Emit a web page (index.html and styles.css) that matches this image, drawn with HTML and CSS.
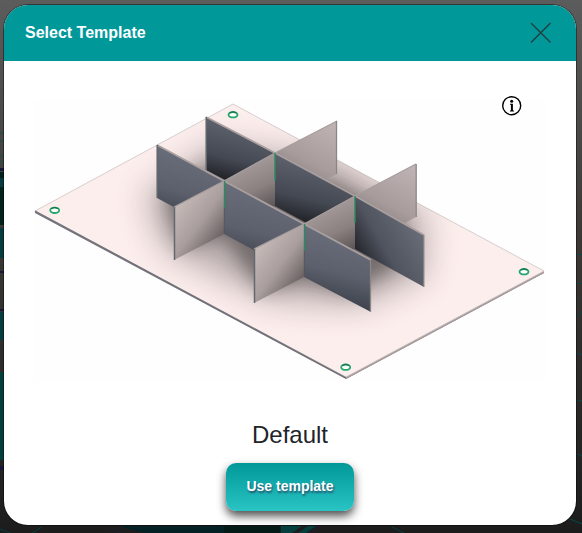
FILE: index.html
```html
<!DOCTYPE html>
<html lang="en">
<head>
    <meta charset="UTF-8">
    <meta name="viewport" content="width=device-width, initial-scale=1.0">
    <title>Select Template</title>
    <link rel="stylesheet" href="styles.css">
</head>
<body>
    <svg class="backdrop" viewBox="0 0 582 533" preserveAspectRatio="none" aria-hidden="true">
        <path d="M0 133H3M0 141H3M0 156H3M0 162H3" stroke="#0c5550"/>
        <path d="M0 172H4V225H0z" fill="#02221c"/>
        <path d="M0 168H4V171H0zM0 271H4V273H0zM0 309H4V311H0z" fill="#16163a"/>
        <path d="M0 178H4V187H0zM0 228H4V258H0zM0 312H4V340H0z" fill="#073b40"/>
        <path d="M0 372H4V460H0z" fill="#043f3c"/>
        <path d="M0 466H4V470H0z" fill="#16163a"/>
        <path d="M122 527L144 533H224V526H122z" fill="#042226"/>
        <path d="M224 526H280V533H224z" fill="#031a17"/>
        <path d="M281 526H302L292 533H281zM308 526H316L306 533H298z" fill="#053f3d"/>
        <path d="M108 527L120 533M320 526L310 533" stroke="#1c1c3c"/>
        <path d="M0 529L10 533M42 527L32 533M392 527L404 533" stroke="#063f40"/>
        <path d="M578 254L582 255M578 282L582 284M578 317L582 311M578 353L582 355M578 400L582 401M578 454L582 456M570 519L582 524" stroke="#064a4b"/>
    </svg>

    <div class="dialog" role="dialog" aria-labelledby="dialog-title">
        <header class="dialog-header">
            <h1 id="dialog-title">Select Template</h1>
            <button class="icon-button" type="button" aria-label="Close">
                <svg width="22" height="22" viewBox="0 0 22 22"><path d="M1 1L20.500 20.500M20.500 1L1 20.500" stroke="#263c3d" stroke-width="1.300"/></svg>
            </button>
        </header>

        <div class="template">
            <button class="icon-button info-button" type="button" aria-label="Template information">
                <svg width="22" height="22" viewBox="0 0 22 22">
                    <circle cx="10.700" cy="10.700" r="9" fill="#fff" stroke="#000" stroke-width="1.400"/>
                    <circle cx="10.700" cy="6.300" r="1.500"/>
                    <path d="M9 8.800H11.900V15.300L13 15.700V16.500H8.900V15.700L9.900 15.300V9.900L9 9.600z"/>
                </svg>
            </button>

            <svg class="preview" viewBox="34 100 512 282" role="img" aria-label="Base plate with crossed dividers">
                <defs>
                    <linearGradient id="dark" x1=".6" y1="0" x2=".4" y2="1">
                        <stop offset="0" stop-color="#6c717d"/>
                        <stop offset=".55" stop-color="#5b606c"/>
                        <stop offset="1" stop-color="#353841"/>
                    </linearGradient>
                    <linearGradient id="deep" x1=".6" y1="0" x2=".4" y2="1">
                        <stop offset="0" stop-color="#656a76"/>
                        <stop offset=".5" stop-color="#444852"/>
                        <stop offset=".85" stop-color="#101114"/>
                    </linearGradient>
                    <linearGradient id="outer" x1=".1" y1=".8" x2=".9" y2=".2">
                        <stop offset="0" stop-color="#1d1f24"/>
                        <stop offset=".4" stop-color="#50545f"/>
                        <stop offset="1" stop-color="#6b707b"/>
                    </linearGradient>
                    <linearGradient id="light" x1=".2" y1=".2" x2=".8" y2=".9">
                        <stop offset="0" stop-color="#c5b9b8"/>
                        <stop offset=".5" stop-color="#a99e9d"/>
                        <stop offset="1" stop-color="#625b5b"/>
                    </linearGradient>
                    <linearGradient id="inner" x1=".3" y1="0" x2=".6" y2="1">
                        <stop offset="0" stop-color="#b1a6a5"/>
                        <stop offset=".5" stop-color="#8a8180"/>
                        <stop offset="1" stop-color="#3b3737"/>
                    </linearGradient>
                    <linearGradient id="back" x1=".8" y1="0" x2=".4" y2="1">
                        <stop offset="0" stop-color="#beb3b2"/>
                        <stop offset=".5" stop-color="#a79c9b"/>
                        <stop offset="1" stop-color="#6e6767"/>
                    </linearGradient>
                    <filter id="wide" x="-30%" y="-30%" width="160%" height="160%"><feGaussianBlur stdDeviation="16"/></filter>
                    <filter id="near" x="-30%" y="-30%" width="160%" height="160%"><feGaussianBlur stdDeviation="9"/></filter>
                    <clipPath id="plate"><path d="M35 211L233 104L544 271L346 378z"/></clipPath>
                </defs>

                <path d="M34 100H546V382H34z" fill="#fefefe"/>
                <path d="M35 211V213L346 379L544 273V271L346 376z" fill="#74727a"/>
                <path d="M346 379L544 273V271L346 376z" fill="#a99d9e"/>
                <path d="M35 211L233 104L544 271L346 377z" fill="#fceeed" stroke="#c5bdbd" stroke-width=".7"/>
                <g clip-path="url(#plate)">
                    <path d="M145 195L215 145L337 160L425 215L425 275L360 305L270 300L165 250z" fill="#655a5b" opacity=".45" filter="url(#wide)"/>
                    <path d="M165 198L210 165L275 190L325 178L405 220L395 268L350 292L304 280L262 290L224 238L180 245z" fill="#332d2e" opacity=".5" filter="url(#near)"/>
                </g>
                <path d="M35 211L346 378" fill="none" stroke="#71717a" stroke-width="1.3"/>

                <g fill="#fff" stroke="#24a66c" stroke-width="1.8">
                    <ellipse cx="233" cy="114.700" rx="4.500" ry="2.700"/>
                    <ellipse cx="54.700" cy="210.300" rx="4.500" ry="2.700"/>
                    <ellipse cx="524" cy="271.700" rx="4.500" ry="2.700"/>
                    <ellipse cx="345.700" cy="367.200" rx="4.500" ry="2.700"/>
                </g>
                <path d="M229.500 113Q233 110.500 236.500 113M51.200 208.600Q54.700 206.100 58.200 208.600M520.500 270Q524 267.500 527.500 270M342.200 365.500Q345.700 363 349.200 365.500" fill="none" stroke="#1c5f45" stroke-width=".9"/>

                <!-- dividers, back to front -->
                <g>
                    <path d="M275 153L337 121V174L275 206z" fill="url(#back)"/>
                    <path d="M355 196L416 164V217L355 249z" fill="url(#back)"/>
                    <path d="M206 117L275 153V206L206 170z" fill="url(#deep)"/>
                    <path d="M275 153L355 196V249L275 206z" fill="url(#deep)"/>
                    <path d="M355 196L424 235V287L355 249z" fill="url(#outer)"/>
                    <path d="M224 181L275 153V206L224 234z" fill="url(#inner)"/>
                    <path d="M304 224L355 196V249L304 277z" fill="url(#inner)"/>
                    <path d="M157 145L224 181V234L157 198z" fill="url(#dark)"/>
                    <path d="M224 181L304 224V277L224 234z" fill="url(#dark)"/>
                    <path d="M304 224L371 260V312L304 277z" fill="url(#dark)"/>
                    <path d="M174 207L224 181V234L174 260z" fill="url(#light)"/>
                    <path d="M254 249L304 224V277L254 303z" fill="url(#light)"/>
                </g>
                <g fill="none">
                    <path d="M206 117L275 153L355 196L424 235M157 145L224 181L304 224L371 260" stroke="#a99f9f" stroke-width="1.800"/>
                    <path d="M174 207L224 181L275 153L337 121M254 249L304 224L355 196L416 164" stroke="#a79e9e" stroke-width="1.300"/>
                    <path d="M174.500 207V260M254.500 249V303M157.200 145V198M206.200 117V170" stroke="#65676e" stroke-width="1.500"/>
                    <path d="M370.500 260V312M423.800 235V287M336.500 121V174M416.200 164V217" stroke="#8c8586" stroke-width="1.300"/>
                    <path d="M224.500 181V208M275 153V181M304.500 224V251M355 196V223" stroke="#2c8a60" stroke-width="1.400"/>
                    <path d="M224.300 208V234M304.300 251V277" stroke="#55545b" stroke-width=".8"/>
                </g>
            </svg>

            <h2>Default</h2>
            <button class="use-button" type="button">Use template</button>
        </div>
    </div>
</body>
</html>
```

FILE: styles.css
```css
* {
    box-sizing: border-box;
}
body {
    font-family: Arial, "Liberation Sans", sans-serif;
    background: linear-gradient(#5c5c5c, #3b3835 45%, #222 90%, #1c1c1c);
    display: flex;
    min-height: 100vh;
    margin: 0;
    padding: 5px 6px 8px 4px;
    color: #212529;
}
h1, h2 {
    margin: 0;
}
.backdrop {
    position: absolute;
    top: 0;
    left: 0;
    width: 100%;
    height: 100%;
    fill: none;
}
.dialog {
    position: relative;
    flex: 1;
    background: white;
    border-radius: 24px;
    overflow: hidden;
    box-shadow: 0 0 0 1px rgba(0, 0, 0, 0.4);
}
.dialog-header {
    display: flex;
    align-items: center;
    justify-content: space-between;
    height: 56px;
    padding: 0 24px 0 21px;
    background: #009899;
    color: white;
}
.dialog-header h1 {
    font-size: 16px;
    line-height: 24px;
}
.icon-button {
    display: block;
    padding: 0;
    border: none;
    background: none;
    cursor: pointer;
}
.icon-button svg {
    display: block;
}
.template {
    position: relative;
    display: flex;
    flex-direction: column;
    align-items: center;
    padding: 39px 30px 14px;
}
.info-button {
    position: absolute;
    top: 34px;
    right: 53px;
}
.preview {
    display: block;
    width: 100%;
}
.template h2 {
    margin: 38px 0 14px;
    font-size: 24px;
    font-weight: normal;
    line-height: 29px;
}
.use-button {
    height: 48px;
    padding: 0 20px 2px;
    border: none;
    border-radius: 10px;
    background: linear-gradient(#009899, #2ac4c4);
    box-shadow: 0 5px 10px rgba(0, 0, 0, 0.7);
    color: white;
    font-family: inherit;
    font-size: 14px;
    font-weight: bold;
    text-shadow: 1px 2px 2px rgba(40, 40, 80, 0.7);
    cursor: pointer;
}
```
